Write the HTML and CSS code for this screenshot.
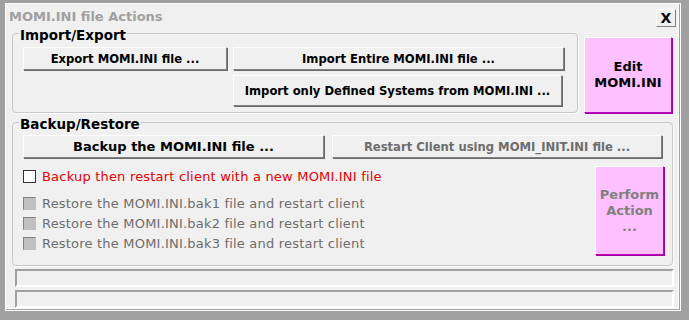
FILE: index.html
```html
<!DOCTYPE html>
<html>
<head>
    <title>MOMI.INI file Actions</title>
    <link rel="stylesheet" href="styles.css">
</head>
<body>
    <div class="window">
        <div class="title-bar">
            <span class="title">MOMI.INI file Actions</span>
            <button class="close-btn">X</button>
        </div>

        <div class="top-row">
            <fieldset class="group import-group">
                <legend>Import/Export</legend>
                <div class="import-grid">
                    <button class="btn btn-export">Export MOMI.INI file ...</button>
                    <button class="btn btn-import-all">Import Entire MOMI.INI file ...</button>
                    <button class="btn btn-import-defined">Import only Defined Systems from MOMI.INI ...</button>
                </div>
            </fieldset>
            <button class="pink-btn edit-btn">Edit<br>MOMI.INI</button>
        </div>

        <fieldset class="group backup-group">
            <legend>Backup/Restore</legend>
            <div class="backup-buttons">
                <button class="btn btn-backup">Backup the MOMI.INI file ...</button>
                <button class="btn btn-restart" disabled>Restart Client using MOMI_INIT.INI file ...</button>
            </div>
            <div class="backup-body">
                <div class="options">
                    <label class="option option-new">
                        <span class="check"></span>
                        Backup then restart client with a new MOMI.INI file
                    </label>
                    <div class="restore-list">
                        <label class="option disabled">
                            <span class="check"></span>
                            Restore the MOMI.INI.bak1 file and restart client
                        </label>
                        <label class="option disabled">
                            <span class="check"></span>
                            Restore the MOMI.INI.bak2 file and restart client
                        </label>
                        <label class="option disabled">
                            <span class="check"></span>
                            Restore the MOMI.INI.bak3 file and restart client
                        </label>
                    </div>
                </div>
                <button class="pink-btn perform-btn" disabled>Perform<br>Action<br>...</button>
            </div>
        </fieldset>

        <div class="status-bar"></div>
        <div class="status-bar"></div>
    </div>
</body>
</html>
```

FILE: styles.css
```css
/* Dialogo de acciones del MOMI.INI */
body {
    margin: 0;
    background-color: #a0a0a0;
    font-family: "DejaVu Sans", Verdana, sans-serif;
    font-size: 13px;
}

.window {
    margin: 3px 8px 7px 5px;
    height: 308px;
    background-color: #f0f0f0;
    border: 1px solid #fff;
    box-shadow: inset -1px -1px 0 #a0a0a0, inset -2px -2px 0 #fff;
    box-sizing: border-box;
    padding: 0 6px 0 6px;
}

.title-bar {
    display: flex;
    justify-content: space-between;
    align-items: flex-start;
    height: 20px;
}

.title {
    margin: 5px 0 0 -3px;
    font-weight: bold;
    font-size: 13px;
    color: #a0a0a0;
}

.close-btn {
    margin: 5px -2px 0 0;
    width: 20px;
    height: 18px;
    padding: 0;
    font-family: "DejaVu Sans", sans-serif;
    font-weight: bold;
    font-size: 14px;
    line-height: 16px;
    color: #000;
    background-color: #f0f0f0;
    border: 1px solid;
    border-color: #fff #808080 #808080 #fff;
}

.group {
    margin: 0;
    padding: 0;
    border: 1px solid #c8c8c8;
    border-radius: 4px;
    box-shadow: 1px 1px 0 #fff;
}

.group legend {
    margin-left: 6px;
    padding: 4px 1px 0 1px;
    font-weight: bold;
    font-size: 13.5px;
    line-height: 14px;
}

.top-row {
    display: flex;
    align-items: flex-end;
    gap: 6px;
}

.import-group {
    width: 566px;
    height: 89px;
    box-sizing: border-box;
}

.import-grid {
    display: grid;
    grid-template-columns: 204px 331px;
    column-gap: 6px;
    row-gap: 5px;
    padding: 5px 0 0 10px;
}

.btn {
    font-family: "DejaVu Sans", Verdana, sans-serif;
    font-weight: bold;
    font-size: 11.6px;
    color: #000;
    background-color: #f0f0f0;
    border: 1px solid;
    border-color: #fff #808080 #808080 #fff;
    box-shadow: 1px 1px 0 #696969;
    padding: 0;
}

.btn-export,
.btn-import-all {
    height: 23px;
}

.btn-import-defined {
    grid-column: 2;
    width: 329px;
    height: 31px;
}

.pink-btn {
    font-family: "DejaVu Sans", Verdana, sans-serif;
    font-weight: bold;
    font-size: 13px;
    line-height: 16px;
    background-color: #ffc0ff;
    border: 1px solid;
    border-color: #fff #c000c0 #c000c0 #fff;
    box-shadow: 1px 1px 0 #a000a0;
    padding: 0;
}

.edit-btn {
    width: 88px;
    height: 76px;
    color: #000;
}

.backup-group {
    width: 661px;
    height: 153px;
    box-sizing: border-box;
}

.backup-buttons {
    display: flex;
    gap: 8px;
    padding: 4px 0 0 10px;
}

.btn-backup {
    width: 301px;
    height: 23px;
    font-size: 13px;
}

.btn-restart {
    width: 330px;
    height: 23px;
    color: #6d6d6d;
}

.backup-body {
    display: flex;
    justify-content: space-between;
    padding: 8px 8px 0 10px;
}

.option {
    display: flex;
    align-items: center;
    gap: 6px;
    height: 20px;
    letter-spacing: 0.2px;
    color: #e00000;
}

.option.disabled {
    color: #6d6d6d;
}

.restore-list {
    margin-top: 7px;
}

.check {
    width: 11px;
    height: 11px;
    background-color: #fff;
    border: 1px solid #333;
}

.option.disabled .check {
    background-color: #c0c0c0;
    border-color: #808080 #c0c0c0 #c0c0c0 #808080;
}

.perform-btn {
    width: 69px;
    height: 89px;
    color: #808080;
}

.status-bar {
    margin: 3px 0 0 3px;
    height: 18px;
    box-sizing: border-box;
    border: 2px solid;
    border-color: #a0a0a0 #fff #fff #a0a0a0;
    background-color: #f0f0f0;
}

.status-bar + .status-bar {
    margin-top: 3px;
}
```
